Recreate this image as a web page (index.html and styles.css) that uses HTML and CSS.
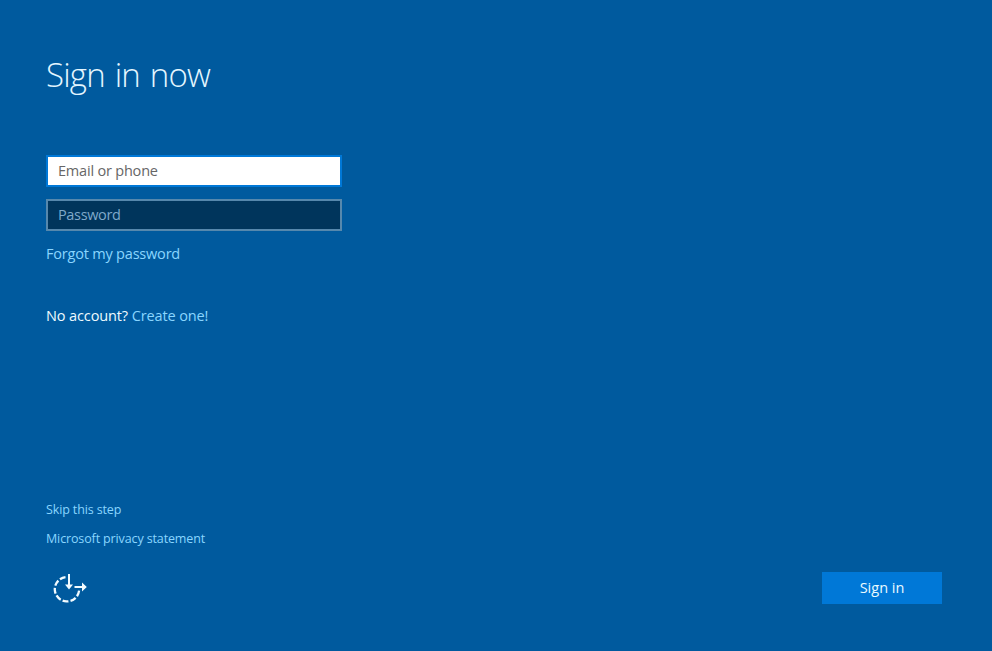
FILE: index.html
```
<!DOCTYPE html>
<html lang="en">
<head>
<meta charset="utf-8">
<title>Sign in now</title>
<link rel="stylesheet" href="styles.css">
</head>
<body>
<form class="page">
  <h1 class="title">Sign in now</h1>
  <div class="fields">
    <input class="field field-active email" type="text" placeholder="Email or phone" aria-label="Email or phone">
    <input class="field password" type="password" placeholder="Password" aria-label="Password">
  </div>
  <a class="link forgot">Forgot my password</a>
  <p class="create"><span class="question">No account?</span> <a class="link create-link">Create one!</a></p>
  <footer class="footer">
    <a class="link small skip">Skip this step</a>
    <a class="link small privacy">Microsoft privacy statement</a>
    <div class="actions">
      <svg class="ease" width="36" height="32" viewBox="0 0 36 32" fill="none" stroke="#f2fbff" stroke-width="2" aria-label="Ease of access">
        <path d="M27.100 18.700A12.200 12.200 0 1 1 13.500 5.100" pathLength="100" stroke-dasharray="11 3.830" stroke-width="2.300"/>
        <path d="M17 2v13M22.500 15h10"/>
        <path d="M13 12.500h8l-4 5zM30 10.500l4.800 4.500-4.800 4.500z" fill="#f2fbff" stroke="none"/>
      </svg>
      <button class="submit" type="button">Sign in</button>
    </div>
  </footer>
</form>
</body>
</html>
```
FILE: styles.css
```
* { box-sizing: border-box; }
body {
  margin: 0;
  background: #005a9e;
  color: #fff;
  font: 14.5px/20px "Open Sans", "Noto Sans", sans-serif;
}
.page {
  display: flex;
  flex-direction: column;
  align-items: flex-start;
  height: 651px;
  padding: 51px 50px 47px 46px;
}
.title {
  margin: 0;
  height: 104px;
  font-size: 33px;
  line-height: 48px;
  font-weight: 300;
  color: #e4f6ff;
  letter-spacing: -0.8px;
  word-spacing: 2px;
}
.fields { display: flex; flex-direction: column; gap: 12px; }
.field {
  width: 296px;
  height: 32px;
  margin: 0;
  padding: 0 10px 2px;
  border: 2px solid #5688ad;
  background: #00355c;
  color: #fff;
  font: inherit;
  letter-spacing: -0.2px;
  outline: 0;
}
.field::placeholder { color: #7fa9ca; opacity: 1; }
.password { letter-spacing: -0.35px; }
.field-active { border-color: #0078d7; background: #fff; color: #000; }
.field-active::placeholder { color: #666; }
.link { color: #8ad6ff; text-decoration: none; }
.forgot { margin-top: 13px; letter-spacing: -0.2px; }
.create { margin: 42px 0 0; letter-spacing: -0.12px; }
.question { color: #effaff; }
.footer {
  display: flex;
  flex-direction: column;
  align-items: flex-start;
  width: 100%;
  margin-top: auto;
}
.small { font-size: 12.5px; line-height: 18px; margin-bottom: 11px; letter-spacing: -0.13px; }
.privacy { margin-bottom: 24px; }
.actions { display: flex; justify-content: space-between; width: 100%; }
.ease { margin-left: 6px; }
.submit {
  width: 120px;
  height: 32px;
  border: 0;
  padding: 0;
  background: #0078d7;
  color: #e8faff;
  font: inherit;
}
```
